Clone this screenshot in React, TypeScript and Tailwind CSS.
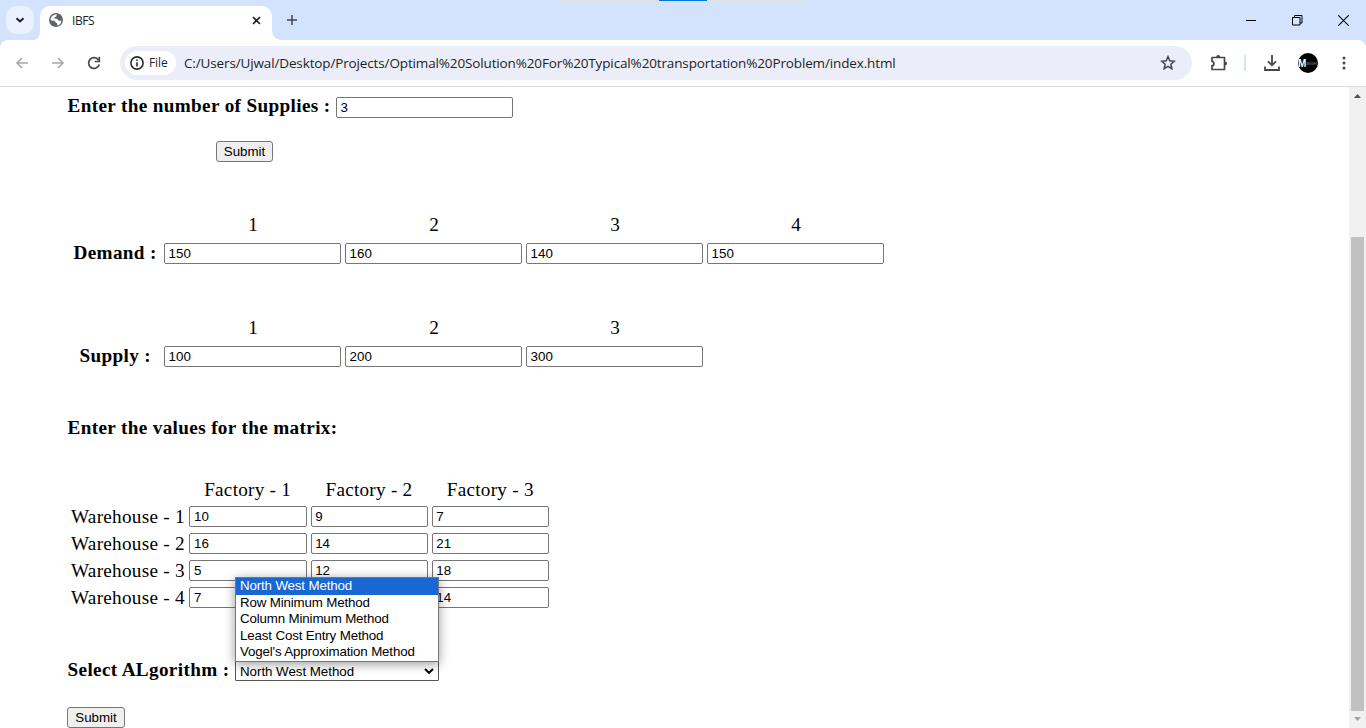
import type { ReactNode } from "react";

const serif = "font-['Liberation_Serif',serif]";
const sans = "font-['Liberation_Sans',sans-serif]";

function Field({ value, width = "w-[177px]" }: { value: string; width?: string }) {
  return (
    <input
      type="text"
      defaultValue={value}
      className={`block h-[21px] shrink-0 rounded-[2px] border border-[#767676] bg-white pr-[4px] pl-[3.6px] text-[13.333px] leading-[15px] text-black outline-none ${sans} ${width}`}
    />
  );
}

function Submit({ className }: { className: string }) {
  return (
    <button
      className={`block h-[21px] shrink-0 rounded-[3px] border border-[#767676] bg-[#efefef] text-center text-[13.333px] leading-[19px] text-black ${sans} ${className}`}
    >
      Submit
    </button>
  );
}

function Bold({ children, className = "" }: { children: ReactNode; className?: string }) {
  return (
    <div className={`shrink-0 whitespace-pre text-[19.2px] leading-[21px] font-bold tracking-[0.35px] ${className}`}>
      {children}
    </div>
  );
}

function Group({ label, pad, values }: { label: string; pad: string; values: string[] }) {
  return (
    <section>
      <div className="flex h-[29px] gap-[3px] pl-[164px]">
        {values.map((_, i) => (
          <div key={i} className="w-[178px] text-center text-[19.2px] leading-[21px]">
            {i + 1}
          </div>
        ))}
      </div>
      <div className="flex h-[21px] gap-[4px]">
        <Bold className={`-mt-px w-[160px] ${pad}`}>{label}</Bold>
        {values.map((v, i) => (
          <Field key={i} value={v} />
        ))}
      </div>
    </section>
  );
}

const matrix = [
  ["10", "9", "7"],
  ["16", "14", "21"],
  ["5", "12", "18"],
  ["7", "", "14"],
];

const methods = [
  "North West Method",
  "Row Minimum Method",
  "Column Minimum Method",
  "Least Cost Entry Method",
  "Vogel's Approximation Method",
];

function TabStrip() {
  return (
    <div className="relative flex h-10 bg-[#d3e2fd]">
      <div className="absolute top-0 left-[560px] flex h-px w-[243px] bg-[#e3e3e3]">
        <div className="ml-[99px] h-px w-[48px] bg-[#0078d7]" />
      </div>
      <div className="mt-[6px] ml-[6px] flex h-7 w-7 items-center justify-center rounded-[10px] bg-[#eaf1fe]">
        <svg width="10" height="8" viewBox="0 0 10 8" fill="none" stroke="#1f1f1f" strokeWidth="1.900">
          <path d="M1.500 2.200 5 5.500 8.500 2.200" />
        </svg>
      </div>
      <svg className="mt-auto" width="6" height="10" viewBox="0 0 6 10">
        <path d="M6 0v10H0C4 10 6 6 6 0Z" fill="#fff" />
      </svg>
      <div className="mt-[6px] flex h-[34px] w-[232px] items-center rounded-t-[10px] bg-white pb-[6px] pl-[9px]">
        <svg width="14" height="14" viewBox="0 0 14 14">
          <circle cx="7" cy="7" r="7" fill="#5f6368" />
          <path d="M8.2 1.6C7 2.2 8.2 3 7 3.7c-1 .5-1.6.4-1.5 1.3.2.9 1.1.6 2.2.8 1.5.3 1 1.700 2.200 1.900 1 .2 1.700-.6 2.500-.2.2 2.200-1.600 4.700-4 5.100-.6-.7.5-1.400-.4-2.200-.7-.6-1.500-.5-1.500-1.400C6.400 7.800 4 7.500 1.600 7.300 1.400 4 4 1.200 8.200 1.600Z" fill="#fff" />
        </svg>
        <span className="mt-px ml-[9px] w-[179.500px] font-['Open_Sans',sans-serif] text-[12px] leading-[16px] tracking-[-0.4px] text-[#1f1f1f]">IBFS</span>
        <svg width="9" height="9" viewBox="0 0 9 9" stroke="#1f1f1f" strokeWidth="1.6">
          <path d="m1 1 7 7m0-7L1 8" />
        </svg>
      </div>
      <svg className="mt-auto" width="10" height="10" viewBox="0 0 10 10">
        <path d="M0 0v10h10C4 10 0 6 0 0Z" fill="#fff" />
      </svg>
      <svg className="mt-[15px] ml-[5px]" width="10" height="10" viewBox="0 0 10 10" stroke="#474747" strokeWidth="1.5">
        <path d="M5 0v10M0 5h10" />
      </svg>
      <div className="mt-[15px] mr-[17px] ml-auto flex h-[11px] items-center gap-[35px] text-black">
        <svg width="11" height="11" viewBox="0 0 11 11" stroke="currentColor">
          <path d="M0 5.500h10" />
        </svg>
        <svg width="11" height="11" viewBox="0 0 11 11" fill="none" stroke="currentColor">
          <path d="M.5 2.500h7.500v7.500H.5zM2.500 2.500V.5h7.500v7.500H8" />
        </svg>
        <svg width="11" height="11" viewBox="0 0 11 11" stroke="currentColor" strokeWidth="1.100">
          <path d="m.3.3 10.400 10.400m0-10.400L.3 10.700" />
        </svg>
      </div>
    </div>
  );
}

function Toolbar() {
  return (
    <div className="bg-[#d3e2fd]">
      <div className="flex h-[47px] items-center rounded-t-[8px] border-b border-[#dedede] bg-white">
        <svg className="ml-[15px]" width="13" height="12" viewBox="0 0 13 12" fill="none" stroke="#a8a8a8" strokeWidth="1.600">
          <path d="M13 6H2M7 1 2 6l5 5" />
        </svg>
        <svg className="ml-[24px]" width="13" height="12" viewBox="0 0 13 12" fill="none" stroke="#a8a8a8" strokeWidth="1.600">
          <path d="M0 6h11M6 1l5 5-5 5" />
        </svg>
        <svg className="ml-[22px]" width="14" height="14" viewBox="0 0 14 14" fill="none" stroke="#474747" strokeWidth="1.700">
          <path d="M12.200 8.500A5.400 5.400 0 1 1 11.500 4" />
          <path d="M12.300.8v4.700H7.700" />
        </svg>
        <div className="ml-[19px] flex h-[34px] w-[1072px] items-center rounded-full bg-[#ebeef8] pl-[5px]">
          <div className="flex h-6 w-[51px] items-center rounded-full bg-white pl-[5px]">
            <svg width="14" height="14" viewBox="0 0 14 14" fill="none" stroke="#2b2b2b" strokeWidth="1.600">
              <circle cx="7" cy="7" r="6.100" />
              <path d="M7 6.200v4.300M7 3.400V5" />
            </svg>
            <span className="ml-[5px] font-['Open_Sans',sans-serif] text-[12px] leading-[16px] tracking-[-0.1px] text-[#1f1f1f]">File</span>
          </div>
          <span className="ml-[8px] w-[976px] whitespace-nowrap font-['Open_Sans',sans-serif] text-[13.500px] leading-[18px] tracking-[-0.137px] text-[#1f1f1f]">
            C:/Users/Ujwal/Desktop/Projects/Optimal%20Solution%20For%20Typical%20transportation%20Problem/index.html
          </span>
          <svg width="16" height="16" viewBox="0 0 16 16" fill="none" stroke="#474747" strokeWidth="1.500">
            <path d="m8 1.600 1.750 4.250 4.600.4-3.500 3 1.050 4.500L8 11.350 4.100 13.750l1.050-4.500-3.500-3 4.600-.4Z" />
          </svg>
        </div>
        <svg className="ml-[18px]" width="18" height="18" viewBox="0 0 18 18">
          <path d="M2 3.500h12.500v12H2v-3.800c2.600-.2 2.600-3.900 0-4.200Z" fill="none" stroke="#474747" strokeWidth="1.700" strokeLinejoin="round" />
          <path d="M6.200 3a2 2 0 0 1 4 0ZM15 7.500a2 2 0 0 1 0 4Z" fill="#474747" />
        </svg>
        <div className="ml-[16px] h-4 w-[2px] bg-[#d3e2fd]" />
        <svg className="ml-[18px]" width="16" height="16" viewBox="0 0 16 16" fill="none" stroke="#474747" strokeWidth="1.800">
          <path d="M8 0v10M4 6.300l4 4 4-4M1 11.500V15h14v-3.500" />
        </svg>
        <div className={`ml-[18px] flex h-5 w-5 items-center overflow-hidden rounded-full bg-black text-white ${sans}`}>
          <span className="text-[10px] font-bold">M</span>
          <span className="mt-[2px] text-[5px] text-[#777]">aster</span>
        </div>
        <svg className="ml-[24px]" width="4" height="14" viewBox="0 0 4 14" fill="#474747">
          <circle cx="2" cy="2" r="1.500" />
          <circle cx="2" cy="7" r="1.500" />
          <circle cx="2" cy="12" r="1.500" />
        </svg>
      </div>
    </div>
  );
}

function Scrollbar() {
  return (
    <div className="flex h-full w-[17px] shrink-0 flex-col items-center bg-[#f1f1f1]">
      <svg width="7" height="4" viewBox="0 0 7 4" className="mt-[7px] mr-px shrink-0">
        <path d="M0 4h7L3.500 0Z" fill="#505050" />
      </svg>
      <div className="mt-[139px] mr-px h-[474px] w-[13px] shrink-0 bg-[#c1c1c1]" />
      <svg width="7" height="4" viewBox="0 0 7 4" className="mt-[6px] mr-px shrink-0">
        <path d="M0 0h7L3.500 4Z" fill="#a3a3a3" />
      </svg>
    </div>
  );
}

export default function App() {
  return (
    <div className="h-[728px] w-[1366px] overflow-hidden bg-white">
      <TabStrip />
      <Toolbar />
      <div className="flex h-[641px]">
        <main className={`flex min-w-0 flex-1 flex-col pt-[10px] text-black ${serif}`}>
          <div className="flex h-[44px] pl-[67.5px]">
            <Bold className="-mt-[2px] w-[268.5px]">Enter the number of Supplies :</Bold>
            <Field value="3" />
          </div>
          <Submit className="ml-[216px] w-[57px]" />

          <div className="mt-[52px]">
            <Group label="Demand :" pad="pl-[73.5px]" values={["150", "160", "140", "150"]} />
          </div>
          <div className="mt-[53px]">
            <Group label="Supply :" pad="pl-[79.5px]" values={["100", "200", "300"]} />
          </div>

          <Bold className="mt-[50px] pl-[67.5px]">Enter the values for the matrix:</Bold>

          <div className="mt-[41px] flex h-[27px] gap-[4px] pl-[189px] text-[19.2px] leading-[21px] tracking-[0.25px]">
            {[1, 2, 3].map((n) => (
              <div key={n} className="w-[117.3px] text-center">
                Factory - {n}
              </div>
            ))}
          </div>
          <div className="flex flex-col gap-[6px]">
            {matrix.map((row, i) => (
              <div key={i} className="flex h-[21px] gap-[4px] pl-[71px]">
                <div className="w-[114.4px] shrink-0 whitespace-nowrap text-[19.2px] leading-[21px] tracking-[0.27px]">
                  Warehouse - {i + 1}
                </div>
                {row.map((v, j) => (
                  <Field key={j} value={v} width="w-[117.2px]" />
                ))}
              </div>
            ))}
          </div>

          <div className="mt-[52px] flex h-[21px] pl-[67.5px]">
            <Bold className="-mt-px w-[167.500px]">Select ALgorithm :</Bold>
            <div className={`relative mt-px h-[20px] w-[204px] text-[13.333px] text-black ${sans}`}>
              <div className="flex h-[20px] items-center justify-between rounded-[1px] border border-[#555] bg-white pr-[4px] pl-[4px] leading-[18px]">
                <span className="pt-[2px] tracking-[-0.03px]">North West Method</span>
                <svg width="10" height="6" viewBox="0 0 10 6" fill="none" stroke="#000" strokeWidth="2">
                  <path d="m1 1 4 3.800L9 1" />
                </svg>
              </div>
              <div className="absolute bottom-[19px] left-0 h-[85px] w-[204px] border border-[#767676] bg-white tracking-[-0.15px] shadow-[0_2px_10px_rgba(0,0,0,0.4)]">
                {methods.map((m, i) => (
                  <div
                    key={m}
                    className={
                      i === 0
                        ? "h-[17px] bg-[#1967d2] pl-[4px] leading-[16px] text-white"
                        : "h-[16.400px] pl-[4px] leading-[16.400px]"
                    }
                  >
                    {m}
                  </div>
                ))}
              </div>
            </div>
          </div>
          <Submit className="mt-[26px] ml-[67px] w-[58px]" />
        </main>
        <Scrollbar />
      </div>
    </div>
  );
}
